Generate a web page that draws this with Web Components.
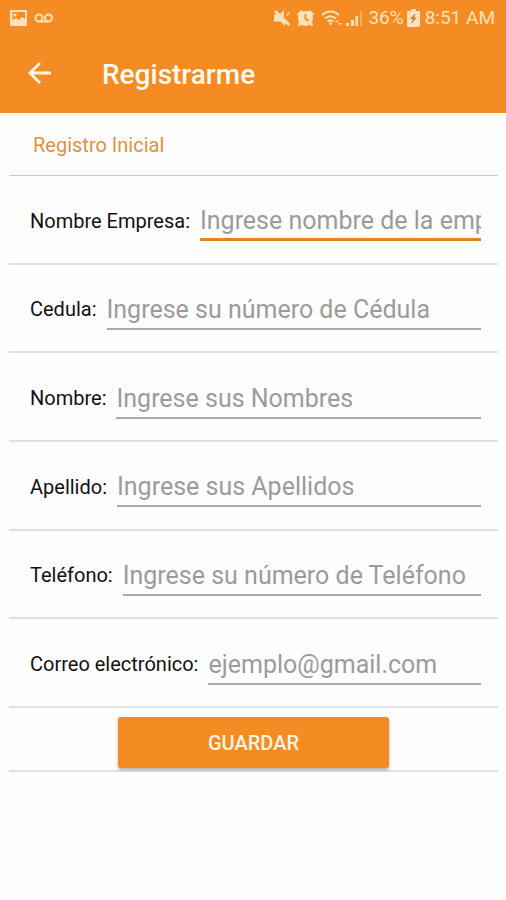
<!DOCTYPE html>
<html lang="es">
<head>
<meta charset="utf-8">
<meta name="viewport" content="width=device-width, initial-scale=1">
<title>Registrarme</title>
<style>
  html, body { margin: 0; background: #fefefe; }
  body { font-family: Roboto, "Liberation Sans", sans-serif; --brand: #f58c23; --rule: #e0e0e0; }
</style>
</head>
<body>
<register-screen></register-screen>

<template id="status-bar">
  <style>
    :host { display: flex; align-items: center; justify-content: space-between; height: 36px; padding: 0 11px 0 10px; color: #ffe2bc; font-size: 19px; line-height: 36px; }
    div { display: flex; align-items: center; }
    .left { gap: 7px; }
    .right { gap: 5px; }
    svg { display: block; fill: currentColor; }
    .level { display: flex; gap: 3px; }
  </style>
  <div class="left">
    <svg width="17" height="16" viewBox="0 0 17 16"><path fill-rule="evenodd" d="M1 0h15q1 0 1 1v14q0 1-1 1H1q-1 0-1-1V1q0-1 1-1zM2.500 2v8l3.500-2 3 2 3-3 3 2V2z"/><circle cx="5" cy="5" r="1.500"/></svg>
    <svg width="20" height="10" viewBox="0 0 20 10" style="fill:none" stroke="currentColor" stroke-width="2"><circle cx="5" cy="5" r="3.500"/><circle cx="14.500" cy="5" r="3.500"/><path d="M5 8.500h9.500"/></svg>
  </div>
  <div class="right">
    <svg width="18" height="18" viewBox="0 0 18 18"><path d="M1 5.500h3.500L15 15v1.500l-3-2.500V17L7.500 12.500H1zM7 5l4-4v8zM13 6l3-3 1 1-3 3z"/><path d="M2 2l14.500 14" stroke="currentColor" stroke-width="2.500"/></svg>
    <svg width="19" height="18" viewBox="0 0 19 18"><path fill-rule="evenodd" d="M9.500 2a7.500 7.500 0 1 1 0 15 7.500 7.500 0 0 1 0-15zM8.500 5v5.500l4 2 .8-1.500-3-1.500V5z"/><path d="M1 5l4-4 2 1.500-5 4.500zM18 5l-4-4-2 1.500 5 4.500zM3 13l2.500 2.500L3 17.500 2 16.500zM16 13l-2.500 2.500 2.500 2 1-1z"/></svg>
    <svg width="43" height="18" viewBox="0 0 43 18"><g fill="none" stroke="currentColor" stroke-width="2"><path d="M2 6q8.500-7 17 0M5 9.500q5.500-4.500 11 0M7.500 12.500q3-2.500 6 0"/></g><circle cx="10.500" cy="14.500" r="1.500"/><path d="M15 13l2-2 2 2zM18 14h4l-2 2zM26 14h3v3h-3zM31 11h3v6h-3zM35.500 7h2.500v10h-2.500z"/><path opacity=".4" d="M40 2h2v15h-2z"/></svg>
    <div class="level"><span>36%</span>
    <svg width="13" height="18" viewBox="0 0 13 18"><path d="M4 0h5v2h3q1 0 1 1v14q0 1-1 1H1q-1 0-1-1V3q0-1 1-1h3z"/><path fill="#c07c45" d="M8.500 4L3 10h3l-2 5 6-6.500H7z"/></svg></div>
    <span>8:51 AM</span>
  </div>
</template>

<template id="app-bar">
  <style>
    :host { display: block; background: var(--brand); color: #fffaf0; }
    header { display: flex; align-items: center; gap: 50px; height: 77px; padding: 0 27px; box-sizing: border-box; }
    button { display: block; padding: 0; border: 0; background: none; color: inherit; cursor: pointer; }
    svg { display: block; }
    h1 { margin: 0; font-size: 28px; font-weight: 500; line-height: 36px; }
  </style>
  <status-bar></status-bar>
  <header>
    <button type="button" aria-label="Volver"><svg width="25" height="26" viewBox="0 0 25 26" fill="none" stroke="currentColor" stroke-width="2.800"><path d="M24 11H3M13 1L3 11l10 10"/></svg></button>
    <h1><slot></slot></h1>
  </header>
</template>

<template id="form-field">
  <style>
    :host { display: flex; align-items: center; border-bottom: 2px solid var(--rule); padding: 0 17px 0 21px; }
    .row { display: flex; align-items: center; gap: 10px; flex: 1; min-width: 0; }
    label { padding-top: 3px; color: #111; font-size: 20px; line-height: 24px; white-space: nowrap; }
    input { flex: 1; min-width: 0; width: 0; height: 44px; box-sizing: border-box; padding: 5px 0 0; border: 0; border-bottom: 2px solid #aaa; border-radius: 0; outline: 0; background: none; color: #222; font: 25px/32px Roboto, "Liberation Sans", sans-serif; }
    input::placeholder { color: #9b9b9b; opacity: 1; }
    input:focus, :host([active]) input { border-bottom: 3px solid #e58322; }
  </style>
  <div class="row"><label for="field"></label><input id="field"></div>
</template>

<template id="save-button">
  <style>
    :host { display: flex; justify-content: center; padding: 9px 0 2px; border-bottom: 2px solid var(--rule); }
    button { width: 55.3%; height: 51px; padding: 0; border: 0; border-radius: 3px; background: var(--brand); color: #fff5e2; font: 500 20px/24px Roboto, "Liberation Sans", sans-serif; box-shadow: 0 2px 3px rgba(0,0,0,.3); cursor: pointer; }
  </style>
  <button type="submit"><slot></slot></button>
</template>

<template id="register-screen">
  <style>
    :host { display: block; }
    form { margin: 0 8px 0 9px; }
    h2 { margin: 0; padding: 20px 24px 18px; border-bottom: 1px solid #dcc9a4; color: #dc943f; font-size: 20px; font-weight: 400; line-height: 24px; }
    .fields { display: grid; grid-auto-rows: 1fr; min-height: 532px; }
  </style>
  <app-bar>Registrarme</app-bar>
  <form>
    <h2>Registro Inicial</h2>
    <div class="fields">
      <form-field label="Nombre Empresa:" hint="Ingrese nombre de la empresa" active></form-field>
      <form-field label="Cedula:" hint="Ingrese su número de Cédula"></form-field>
      <form-field label="Nombre:" hint="Ingrese sus Nombres"></form-field>
      <form-field label="Apellido:" hint="Ingrese sus Apellidos"></form-field>
      <form-field label="Teléfono:" hint="Ingrese su número de Teléfono" type="tel"></form-field>
      <form-field label="Correo electrónico:" hint="ejemplo@gmail.com" type="email"></form-field>
    </div>
    <save-button>GUARDAR</save-button>
  </form>
</template>

<script>
  class TemplateElement extends HTMLElement {
    constructor() {
      super();
      const template = document.getElementById(this.localName);
      this.attachShadow({ mode: "open" }).append(template.content.cloneNode(true));
    }
  }
  class StatusBar extends TemplateElement {}
  class AppBar extends TemplateElement {}
  class SaveButton extends TemplateElement {}
  class RegisterScreen extends TemplateElement {}
  class FormField extends TemplateElement {
    connectedCallback() {
      const input = this.shadowRoot.querySelector("input");
      this.shadowRoot.querySelector("label").textContent = this.getAttribute("label");
      input.placeholder = this.getAttribute("hint");
      input.type = this.getAttribute("type") || "text";
    }
  }
  customElements.define("status-bar", StatusBar);
  customElements.define("app-bar", AppBar);
  customElements.define("form-field", FormField);
  customElements.define("save-button", SaveButton);
  customElements.define("register-screen", RegisterScreen);
</script>
</body>
</html>
